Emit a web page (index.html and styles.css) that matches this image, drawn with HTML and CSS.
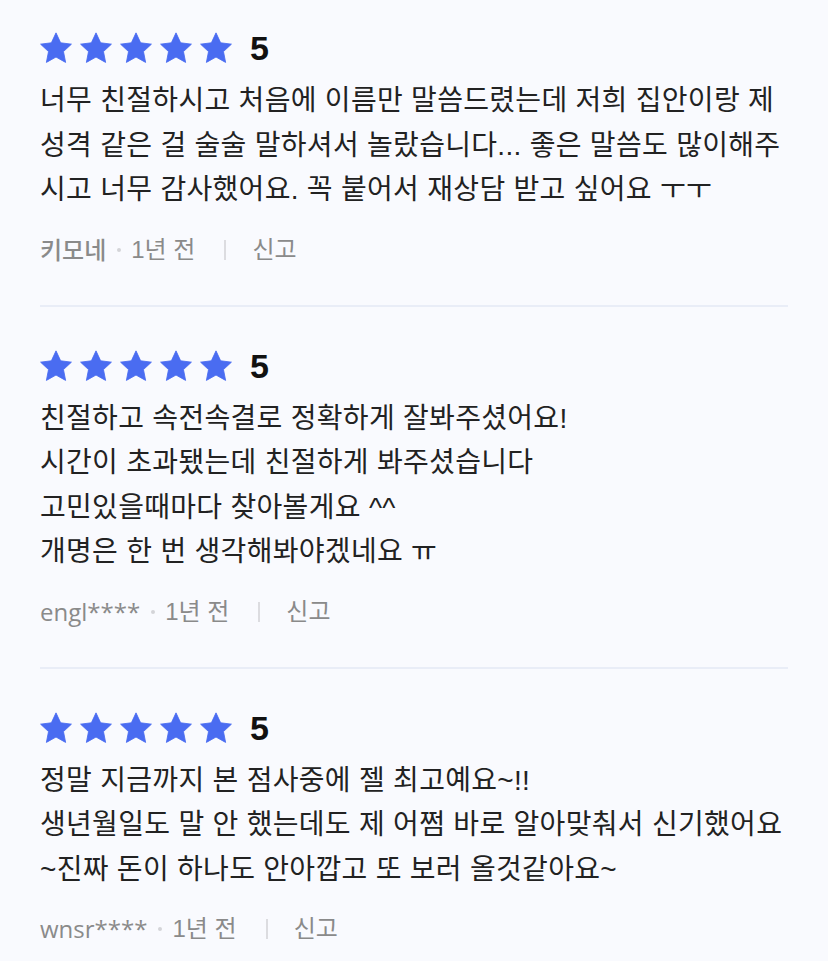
FILE: index.html
```html
<!DOCTYPE html>
<html>
<head>
  <meta charset="utf-8">
  <title>후기</title>
  <link rel="stylesheet" href="styles.css">
</head>
<body>
  <svg width="0" height="0" style="position:absolute">
    <defs>
      <symbol id="star" viewBox="1 1 22 22">
        <polygon points="12,1.6 15.18,8.43 22.6,9.35 17.14,14.47 18.6,21.9 12,18.2 5.4,21.9 6.86,14.47 1.4,9.35 8.82,8.43"/>
      </symbol>
    </defs>
  </svg>

  <div class="review-list">
    <div class="review">
      <div class="rating">
        <span class="stars">
          <svg><use href="#star"/></svg><svg><use href="#star"/></svg><svg><use href="#star"/></svg><svg><use href="#star"/></svg><svg><use href="#star"/></svg>
        </span>
        <span class="score">5</span>
      </div>
      <p class="review-text">너무 친절하시고 처음에 이름만 말씀드렸는데 저희 집안이랑 제<br>성격 같은 걸 술술 말하셔서 놀랐습니다... 좋은 말씀도 많이해주<br>시고 너무 감사했어요. 꼭 붙어서 재상담 받고 싶어요 ㅜㅜ</p>
      <div class="meta">
        <span class="author">키모네</span>
        <span class="dot"></span>
        <span>1년 전</span>
        <span class="bar"></span>
        <a class="report">신고</a>
      </div>
    </div>

    <div class="review">
      <div class="rating">
        <span class="stars">
          <svg><use href="#star"/></svg><svg><use href="#star"/></svg><svg><use href="#star"/></svg><svg><use href="#star"/></svg><svg><use href="#star"/></svg>
        </span>
        <span class="score">5</span>
      </div>
      <p class="review-text">친절하고 속전속결로 정확하게 잘봐주셨어요!<br>시간이 초과됐는데 친절하게 봐주셨습니다<br>고민있을때마다 찾아볼게요 ^^<br>개명은 한 번 생각해봐야겠네요 ㅠ</p>
      <div class="meta">
        <span class="author">engl****</span>
        <span class="dot"></span>
        <span>1년 전</span>
        <span class="bar"></span>
        <a class="report">신고</a>
      </div>
    </div>

    <div class="review">
      <div class="rating">
        <span class="stars">
          <svg><use href="#star"/></svg><svg><use href="#star"/></svg><svg><use href="#star"/></svg><svg><use href="#star"/></svg><svg><use href="#star"/></svg>
        </span>
        <span class="score">5</span>
      </div>
      <p class="review-text">정말 지금까지 본 점사중에 젤 최고예요~!!<br>생년월일도 말 안 했는데도 제 어쩜 바로 알아맞춰서 신기했어요<br>~진짜 돈이 하나도 안아깝고 또 보러 올것같아요~</p>
      <div class="meta">
        <span class="author">wnsr****</span>
        <span class="dot"></span>
        <span>1년 전</span>
        <span class="bar"></span>
        <a class="report">신고</a>
      </div>
    </div>
  </div>
</body>
</html>
```

FILE: styles.css
```css
body {
  margin: 0;
  background-color: #f9fafe;
  font-family: "Liberation Sans", "Noto Sans CJK KR", sans-serif;
  color: #222;
}

.review-list {
  padding: 0 40px;
}

.review {
  padding: 43px 0 40px;
}

.review:first-child {
  padding-top: 32px;
}

.review + .review {
  border-top: 2px solid #e9edf7;
}

.rating {
  display: flex;
  align-items: center;
  height: 32px;
}

.stars {
  display: flex;
  gap: 8px;
}

.stars svg {
  width: 32px;
  height: 32px;
  fill: #4a6cf1;
  stroke: #4a6cf1;
  stroke-width: 0.6;
  stroke-linejoin: round;
}

.score {
  margin-left: 18px;
  font-size: 34px;
  font-weight: bold;
  color: #111;
  line-height: 32px;
}

.review-text {
  margin: 15px 0 0;
  font-size: 28px;
  letter-spacing: 0.3px;
  line-height: 44.5px;
  white-space: nowrap;
}

.meta {
  display: flex;
  align-items: center;
  margin-top: 22px;
  font-size: 24px;
  line-height: 30px;
  color: #8a8a8a;
}

/* latin ids are set a bit wider, like the app font */
.author {
  font-family: "Open Sans", "Noto Sans CJK KR", sans-serif;
  font-weight: 500;
}

.dot {
  width: 4px;
  height: 4px;
  border-radius: 50%;
  background-color: #d4d4d8;
  margin: 0 10px 0 11px;
}

.bar {
  width: 2px;
  height: 20px;
  background-color: #dcdce0;
  margin: 0 26px 0 29px;
}

.report {
  color: #8a8a8a;
  cursor: pointer;
}
```
